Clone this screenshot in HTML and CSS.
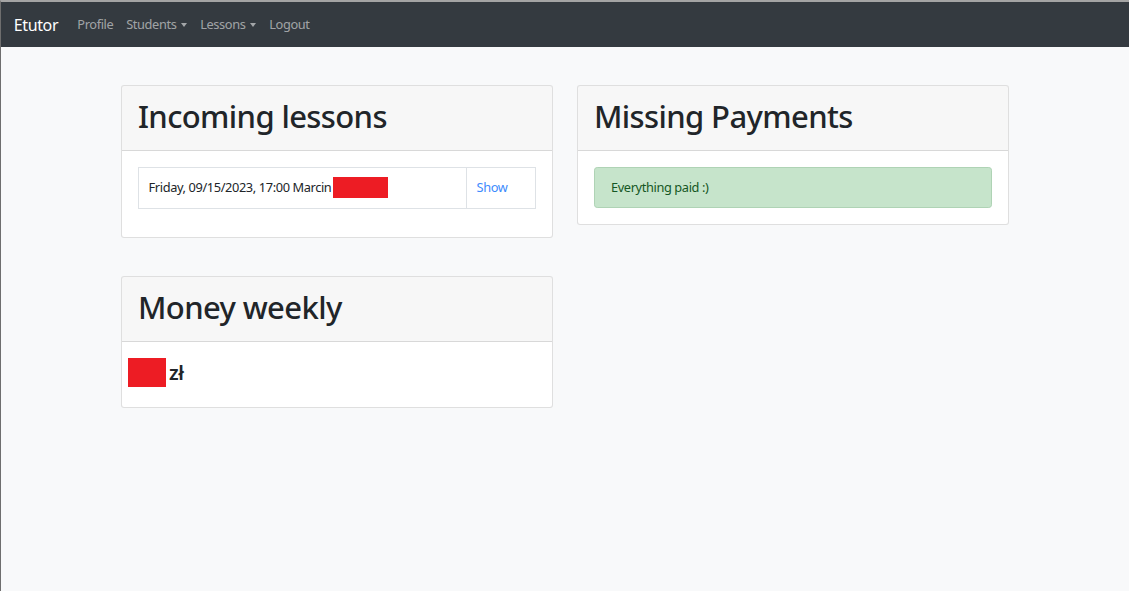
FILE: index.html
```html
<!DOCTYPE html>
<html lang="en">
<head>
<meta charset="utf-8">
<title>Etutor</title>
<link rel="stylesheet" href="styles.css">
</head>
<body>
<div class="frame">
  <nav class="navbar">
    <a class="brand" href="#">Etutor</a>
    <ul class="nav">
      <li><a class="nav-link" href="#">Profile</a></li>
      <li><a class="nav-link dropdown" href="#">Students</a></li>
      <li><a class="nav-link dropdown" href="#">Lessons</a></li>
      <li><a class="nav-link" href="#">Logout</a></li>
    </ul>
  </nav>
  <main class="container">
    <div class="grid">
      <section class="card">
        <div class="card-header"><h1>Incoming lessons</h1></div>
        <div class="card-body">
          <table class="table">
            <tr>
              <td class="lesson">Friday, 09/15/2023, 17:00 Marcin<span class="redact redact-name"></span></td>
              <td class="action"><a href="#">Show</a></td>
            </tr>
          </table>
        </div>
      </section>
      <section class="card">
        <div class="card-header"><h1>Missing Payments</h1></div>
        <div class="card-body">
          <div class="alert">Everything paid :)</div>
        </div>
      </section>
      <section class="card">
        <div class="card-header"><h1>Money weekly</h1></div>
        <div class="card-body money-body">
          <div class="money"><span class="redact redact-amount"></span> zł</div>
        </div>
      </section>
    </div>
  </main>
</div>
</body>
</html>
```

FILE: styles.css
```css
* { box-sizing: border-box; }
html, body { margin: 0; padding: 0; height: 100%; }
body {
  font-family: "Noto Sans", "Open Sans", sans-serif;
  font-size: 12.8px;
  line-height: 1.5;
  letter-spacing: -0.03em;
  color: #212529;
  background: #f8f9fa;
}
.frame {
  min-height: 100%;
  border-top: 2px solid #a4a4a4;
  border-left: 1px solid #6e6e6e;
}
.navbar {
  display: flex;
  align-items: center;
  background: #343a40;
  padding: 7px 12.8px 5.8px;
  height: 44.8px;
}
.brand {
  color: #fff;
  text-decoration: none;
  font-size: 16px;
  line-height: 24px;
  margin-right: 12.8px;
}
.nav { list-style: none; margin: 0; padding: 0; display: flex; }
.nav-link {
  display: block;
  color: rgba(255,255,255,.55);
  text-decoration: none;
  padding: 6.4px 6.4px;
  line-height: 19.2px;
}
.dropdown::after {
  content: "";
  display: inline-block;
  vertical-align: 2px;
  margin-left: 5px;
  border-top: 4px solid;
  border-left: 3.5px solid transparent;
  border-right: 3.5px solid transparent;
}
.container { width: 912px; margin: 0 auto; padding: 0 12px; }
.grid {
  display: grid;
  grid-template-columns: 1fr 1fr;
  column-gap: 24px;
  align-items: start;
}
.card {
  margin-top: 38px;
  background: #fff;
  border: 1px solid rgba(0,0,0,.125);
  border-radius: 3.2px;
  overflow: hidden;
}
.card-header {
  background: rgba(0,0,0,.03);
  border-bottom: 1px solid rgba(0,0,0,.125);
  padding: 11.6px 16px 9.6px;
}
.card-header h1 {
  margin: 0 0 4.4px;
  font-size: 31px;
  line-height: 38.4px;
  font-weight: 500;
  letter-spacing: -0.02em;
}
.card-body { padding: 16px; }
.table {
  width: 100%;
  border-collapse: collapse;
  margin-bottom: 12px;
}
.table td {
  border: 1px solid #dee2e6;
  padding: 0 9.6px;
  height: 41px;
  line-height: 19px;
  vertical-align: middle;
}
.lesson { white-space: nowrap; }
.action { width: 69px; }
.action a { color: #3d8bfd; text-decoration: none; }
.redact { display: inline-block; background: #ed1c24; }
.redact-name { width: 55px; height: 21px; vertical-align: -6px; margin-left: 2px; }
.alert {
  background: #c6e4cb;
  border: 1px solid #afd3b5;
  color: #155724;
  border-radius: 3.2px;
  padding: 0 16px;
  height: 41px;
  display: flex;
  align-items: center;
  line-height: 19px;
}
.money-body { padding: 16px 6px 20px; }
.money {
  font-size: 20px;
  font-weight: 600;
  line-height: 29px;
  display: flex;
  align-items: center;
  gap: 3px;
}
.redact-amount { width: 38px; height: 29px; }
```
